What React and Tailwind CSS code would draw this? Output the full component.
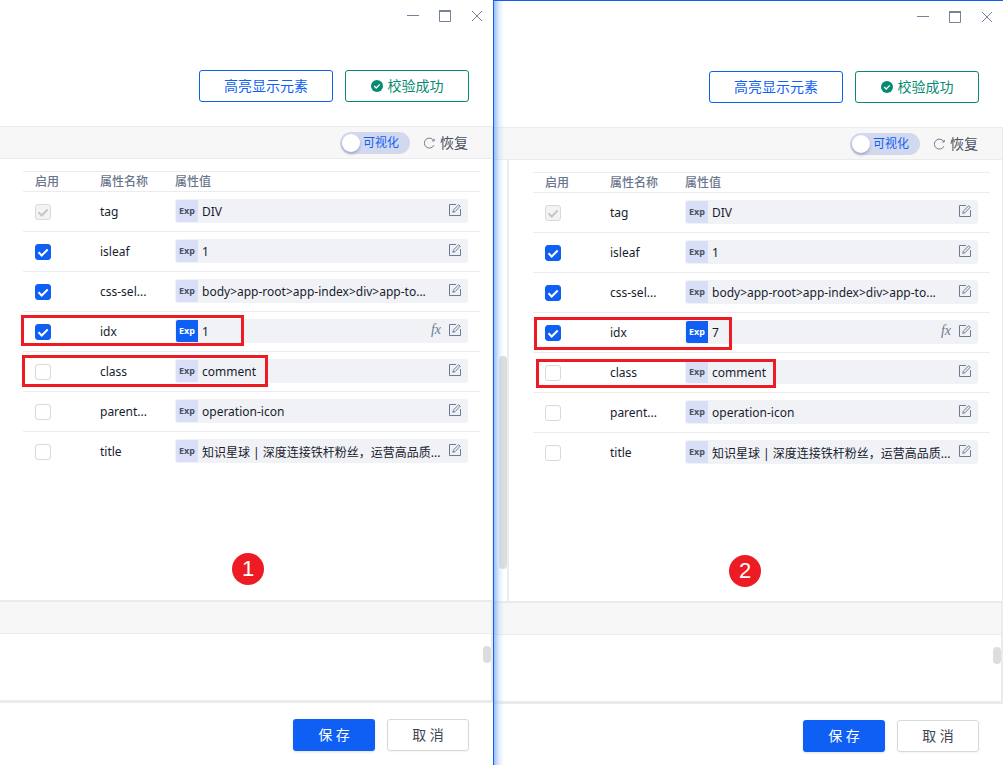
import React from "react";

const BASE_ROWS = [
  { name: "tag", value: "DIV", state: "locked" },
  { name: "isleaf", value: "1", state: "on" },
  { name: "css-sel...", value: "body>app-root>app-index>div>app-to...", state: "on" },
  { name: "idx", value: "1", state: "on", active: true },
  { name: "class", value: "comment", state: "off" },
  { name: "parent...", value: "operation-icon", state: "off" },
  { name: "title", value: "知识星球 | 深度连接铁杆粉丝，运营高品质...", state: "off" },
];

function EditIcon() {
  return (
    <svg width="12" height="12" viewBox="0 0 12 12" fill="none" stroke="#6b7a94" aria-hidden="true">
      <path d="M7 .5H.5v11h11V5" />
      <path d="M3.800 8.300l.5-2.200L9.700.8l1.500 1.500L6 7.700z" />
    </svg>
  );
}

function WindowControls() {
  return (
    <div className="flex justify-end gap-5 pr-2.5 pt-2.5">
      <button type="button" aria-label="最小化" className="size-3">
        <svg width="12" height="12" viewBox="0 0 12 12" stroke="#76839b" aria-hidden="true">
          <path d="M0 5.500h12" />
        </svg>
      </button>
      <button type="button" aria-label="最大化" className="size-3">
        <svg width="12" height="12" viewBox="0 0 12 12" fill="none" stroke="#76839b" aria-hidden="true">
          <path d="M.5 1h11v10.500h-11z" />
          <path d="M0 1h12" strokeWidth="2" />
        </svg>
      </button>
      <button type="button" aria-label="关闭" className="size-3">
        <svg width="12" height="12" viewBox="0 0 12 12" stroke="#76839b" aria-hidden="true">
          <path d="M1 1l10 10M11 1L1 11" />
        </svg>
      </button>
    </div>
  );
}

function Checkbox({ label, state }) {
  return (
    <label className="grid size-4">
      <input
        type="checkbox"
        aria-label={label}
        defaultChecked={state !== "off"}
        disabled={state === "locked"}
        className="col-start-1 row-start-1 size-4 appearance-none rounded-[3px] border border-[#d9d9d9] bg-white checked:border-[#0f5ff5] checked:bg-[#0f5ff5] disabled:border-[#d9d9d9] disabled:bg-[#f3f3f3]"
      />
      {state !== "off" && (
        <svg
          viewBox="0 0 16 16"
          fill="none"
          strokeWidth="2"
          stroke={state === "locked" ? "#c4c6cb" : "#fff"}
          className="pointer-events-none col-start-1 row-start-1 size-4"
          aria-hidden="true"
        >
          <path d="M3.500 8.300l3.200 3.200 6-6" />
        </svg>
      )}
    </label>
  );
}

function Row({ row, last }) {
  return (
    <tr className={last ? "h-10" : "h-10 border-b border-[#ececee]"}>
      <td className="pl-3">
        <Checkbox label={row.name} state={row.state} />
      </td>
      <td className="pl-3">{row.name}</td>
      <td className="px-3 pb-0.5">
        <div className="flex h-6 items-center rounded-[3px] bg-[#f1f2f6] p-px pr-[7px]">
          <button
            type="button"
            className={
              row.active
                ? "h-[22px] w-[22px] shrink-0 rounded-l-[2px] bg-[#0f5ff5] text-[9px] leading-[20px] font-bold text-white"
                : "h-[22px] w-[22px] shrink-0 rounded-l-[2px] bg-[#d8dff6] text-[9px] leading-[20px] font-bold text-[#4a5268]"
            }
          >
            Exp
          </button>
          <input
            type="text"
            aria-label={row.name + " 属性值"}
            defaultValue={row.value}
            className="h-[22px] min-w-0 flex-1 bg-transparent pt-0.5 pl-1 text-xs outline-none"
          />
          {row.active && (
            <button
              type="button"
              className="mr-2 pb-0.5 font-['Liberation_Serif',serif] text-[14px] leading-4 text-[#6b7a94] italic"
            >
              fx
            </button>
          )}
          <button type="button" aria-label="编辑" className="h-3.5 w-3 shrink-0 pb-0.5">
            <EditIcon />
          </button>
        </div>
      </td>
    </tr>
  );
}

function Panel({ idx, sideScroll, className }) {
  const rows = BASE_ROWS.map((row) => (row.name === "idx" ? { ...row, value: idx } : row));
  return (
    <section className={className}>
      <header className="h-[126px] shrink-0">
        <WindowControls />
        <div className="mt-12 flex justify-end gap-3 pr-6 text-sm">
          <button type="button" className="h-8 w-[134px] rounded-[3px] border border-[#0f5ff5] text-[#0f5ff5]">
            高亮显示元素
          </button>
          <button
            type="button"
            className="flex h-8 w-[124px] items-center justify-center gap-[5px] rounded-[3px] border border-[#068a72] text-[#068a72]"
          >
            <svg width="12" height="12" viewBox="0 0 12 12" aria-hidden="true">
              <circle cx="6" cy="6" r="6" fill="#068a72" />
              <path d="M3.200 6l2 2 3.600-3.600" fill="none" stroke="#fff" strokeWidth="1.300" />
            </svg>
            校验成功
          </button>
        </div>
      </header>

      <div className="flex h-[33px] shrink-0 items-center justify-end border-y border-r border-[#ebebed] bg-[#f7f7f7] pt-px pr-6">
        <button
          type="button"
          role="switch"
          aria-checked="false"
          className="flex h-[22px] w-[70px] items-center gap-[3px] rounded-full bg-[#d2d8ee] pl-0.5 text-xs text-[#0f5ff5]"
        >
          <span className="size-[18px] rounded-full bg-white shadow-[0_2px_3px_rgba(60,80,120,0.35)]" />
          可视化
        </button>
        <button type="button" className="ml-3.5 flex items-center gap-[5px] text-sm text-[#4b5263]">
          <svg width="11" height="12" viewBox="0 0 11 12" fill="none" stroke="#737d90" aria-hidden="true">
            <path d="M9.700 3.600A5 5 0 1 0 9.900 8.200" />
            <path d="M10.200 1.800v2.200H8.200" />
          </svg>
          恢复
        </button>
      </div>

      <div className="flex min-h-[441px] shrink-0 border-r border-[#ebebed]">
        {sideScroll && (
          <div className="w-[15px] shrink-0 border-r-2 border-[#ececee] pt-[196px] pl-[5px]">
            <div className="h-[213px] w-2 rounded-full bg-[#dcdddf]" />
          </div>
        )}
        <div className={sideScroll ? "flex-1 pt-3 pr-3 pl-6" : "flex-1 pt-3 pr-3 pl-[23px]"}>
          <table className="w-full table-fixed border-collapse text-xs text-[#171c2e]">
            <thead>
              <tr className="h-5 border-y border-[#ececee] text-left text-[#69758c]">
                <th className="w-[65px] pl-3 font-medium">启用</th>
                <th className="w-[75px] pl-3 font-medium">属性名称</th>
                <th className="px-3 font-medium">属性值</th>
              </tr>
            </thead>
            <tbody>
              {rows.map((row, i) => (
                <Row key={row.name} row={row} last={i === rows.length - 1} />
              ))}
            </tbody>
          </table>
        </div>
      </div>

      <div className="shrink-0 border-t-2 border-r-2 border-b-3 border-[#ebebed]">
        <div className="h-8 border-b border-[#ebebed] bg-[#f7f7f7]" />
        <div className="flex h-[66px] justify-end pt-3">
          <div className="h-[17px] w-2 rounded-full bg-[#dcdddf]" />
        </div>
      </div>

      <footer className="flex grow justify-end gap-3 pt-4 pr-6 text-sm">
        <button type="button" className="h-8 w-[82px] rounded-[3px] bg-[#0f5ff5] text-white shadow-sm">
          保 存
        </button>
        <button type="button" className="h-8 w-[82px] rounded-[3px] border border-[#d9d9d9] text-[#3f4656] shadow-xs">
          取 消
        </button>
      </footer>
    </section>
  );
}

function Marker({ className, children }) {
  return (
    <div
      className={
        "absolute flex size-8 items-center justify-center rounded-full bg-[#ed1c24] font-['Liberation_Sans',sans-serif] text-[22px] leading-8 text-white " +
        className
      }
    >
      {children}
    </div>
  );
}

export default function App() {
  return (
    <main className="grid min-h-screen grid-cols-[494fr_509fr] bg-white font-['Noto_Sans','Noto_Sans_CJK_SC',sans-serif]">
      <div className="relative flex border-r border-[#1260f0]">
        <Panel idx="1" className="flex min-w-0 flex-1 flex-col" />
        <div className="pointer-events-none absolute top-[315px] left-[21px] h-[31px] w-[223px] border-3 border-[#ed1c24]" />
        <div className="pointer-events-none absolute top-[355px] left-[22px] h-8 w-[246px] border-3 border-[#ed1c24]" />
        <Marker className="top-[553px] left-[232px]">1</Marker>
      </div>
      <div className="relative flex border-t border-[#0f5ff5]">
        <Panel idx="7" sideScroll className="flex min-w-0 flex-1 flex-col" />
        <div className="pointer-events-none absolute inset-y-0 left-0 w-2.5 bg-linear-to-r from-[#6fa3ee]/70 via-[#a9c9f8]/35 to-transparent" />
        <div className="pointer-events-none absolute top-[316px] left-10 h-[33px] w-[198px] border-3 border-[#ed1c24]" />
        <div className="pointer-events-none absolute top-[358px] left-[42px] h-[29px] w-60 border-3 border-[#ed1c24]" />
        <Marker className="top-[554px] left-[235px]">2</Marker>
      </div>
    </main>
  );
}
